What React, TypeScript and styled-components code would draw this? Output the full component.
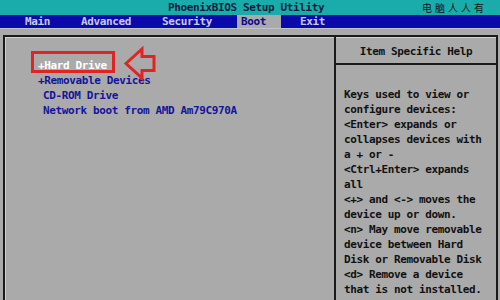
import styled, {createGlobalStyle} from "styled-components";

const Global = createGlobalStyle`
  html, body {
    margin: 0;
    padding: 0;
    background: #aaaaaa;
    overflow: hidden;
  }
`

const Screen = styled.div`
  width: 500px;
  height: 300px;
  background: #aaaaaa;
  font-family: "DejaVu Sans Mono", "Liberation Mono", monospace;
  font-size: 11px;
  letter-spacing: -0.37px;
  font-weight: bold;
  display: flex;
  flex-direction: column;
  overflow: hidden;
`

const TitleBar = styled.div`
  height: 15px;
  background: #1aacab;
  color: #10203a;
  display: flex;
  align-items: center;
  padding-left: 168px;
  padding-right: 13px;
  .cn{
    margin-left: auto;
    font-family: "Noto Sans CJK SC", sans-serif;
    font-size: 10px;
    letter-spacing: 3px;
    font-weight: normal;
    color: #111;
  }
`

const MenuBar = styled.div`
  height: 15px;
  background: #0a0aaa;
  display: flex;
  align-items: stretch;
  padding-left: 21px;
  border-bottom: 1px solid #c4c4c4;
`

const Tab = styled.div<{ $w: number; $on?: boolean; $gap?: number }>`
  width: ${p => p.$w}px;
  margin-left: ${p => p.$gap || 0}px;
  padding-left: 4px;
  box-sizing: border-box;
  display: flex;
  align-items: center;
  color: ${p => p.$on ? '#0a0a8a' : '#c8c8f0'};
  background: ${p => p.$on ? '#aaaaaa' : 'transparent'};
`

const Body = styled.div`
  flex: 1;
  padding: 6px 2px 0 3px;
`

const Frame = styled.div`
  height: 280px;
  border: 2px solid #1a1a1a;
  box-shadow: inset 1px 1px 0 #d0d0d0;
  display: grid;
  grid-template-columns: 1fr 162px;
`

const Boot = styled.div`
  position: relative;
  padding: 21px 0 0 33px;
`

const Item = styled.div<{ $sub?: boolean; $sel?: boolean }>`
  height: 15px;
  line-height: 15px;
  padding-left: ${p => p.$sub ? 5 : 0}px;
  color: ${p => p.$sel ? '#ffffff' : '#14149c'};
  white-space: pre;
`

const Mark = styled.div`
  position: absolute;
  left: 26px;
  top: 14px;
  width: 84px;
  height: 22px;
  box-sizing: border-box;
  border: 3px solid #e02424;
`

const Arrow = styled.svg`
  position: absolute;
  left: 117px;
  top: 9px;
`

const Help = styled.div`
  border-left: 2px solid #1a1a1a;
  display: flex;
  flex-direction: column;
`

const HelpHead = styled.div`
  height: 28px;
  padding-top: 2px;
  box-sizing: border-box;
  border-bottom: 2px solid #1a1a1a;
  display: flex;
  align-items: center;
  justify-content: center;
  color: #111;
`

const HelpText = styled.div`
  padding: 22px 0 0 8px;
  color: #111;
  div{
    height: 15px;
    line-height: 15px;
    white-space: pre;
  }
`

const helpLines = [
    'Keys used to view or',
    'configure devices:',
    '<Enter> expands or',
    'collapses devices with',
    'a + or -',
    '<Ctrl+Enter> expands',
    'all',
    '<+> and <-> moves the',
    'device up or down.',
    '<n> May move removable',
    'device between Hard',
    'Disk or Removable Disk',
    '<d> Remove a device',
    'that is not installed.',
]

export default function App(){
    return <Screen>
        <Global/>
        <TitleBar>
            <span>PhoenixBIOS Setup Utility</span>
            <span className="cn">电脑人人有</span>
        </TitleBar>
        <MenuBar>
            <Tab $w={56}>Main</Tab>
            <Tab $w={81}>Advanced</Tab>
            <Tab $w={79}>Security</Tab>
            <Tab $w={44} $on>Boot</Tab>
            <Tab $w={60} $gap={15}>Exit</Tab>
        </MenuBar>
        <Body>
            <Frame>
                <Boot>
                    <Item $sel>+Hard Drive</Item>
                    <Item>+Removable Devices</Item>
                    <Item $sub>CD-ROM Drive</Item>
                    <Item $sub>Network boot from AMD Am79C970A</Item>
                    <Mark/>
                    <Arrow width="36" height="36" viewBox="0 0 36 36">
                        <polygon points="4,17.5 20,3 20,10.5 32,10.5 32,24.5 20,24.5 20,32"
                                 fill="none" stroke="#e02424" strokeWidth="3" strokeLinejoin="miter"/>
                    </Arrow>
                </Boot>
                <Help>
                    <HelpHead>Item Specific Help</HelpHead>
                    <HelpText>
                        {helpLines.map((l, i) => <div key={i}>{l}</div>)}
                    </HelpText>
                </Help>
            </Frame>
        </Body>
    </Screen>
}
